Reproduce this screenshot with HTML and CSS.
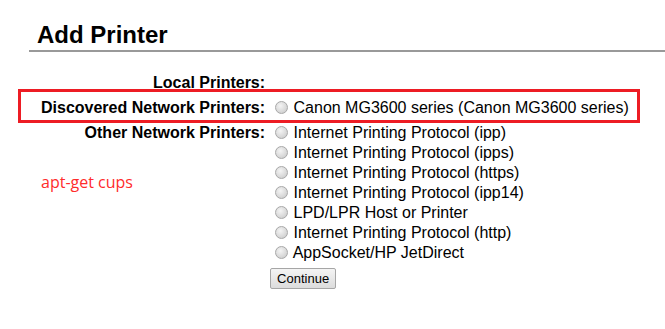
FILE: index.html
```html
<!DOCTYPE html>
<html lang="en">
<head>
    <meta charset="UTF-8">
    <title>Add Printer</title>
    <link rel="stylesheet" href="styles.css">
</head>
<body>
    <div class="page">
        <h2 class="title">Add Printer</h2>
        <form class="add-form">
            <table class="printers">
                <tr>
                    <th>Local Printers:</th>
                    <td></td>
                </tr>
                <tr>
                    <th>Discovered Network Printers:</th>
                    <td><input type="radio" name="device"> Canon MG3600 series (Canon MG3600 series)</td>
                </tr>
                <tr>
                    <th>Other Network Printers:</th>
                    <td>
                        <input type="radio" name="device"> Internet Printing Protocol (ipp)<br>
                        <input type="radio" name="device"> Internet Printing Protocol (ipps)<br>
                        <input type="radio" name="device"> Internet Printing Protocol (https)<br>
                        <input type="radio" name="device"> Internet Printing Protocol (ipp14)<br>
                        <input type="radio" name="device"> LPD/LPR Host or Printer<br>
                        <input type="radio" name="device"> Internet Printing Protocol (http)<br>
                        <input type="radio" name="device"> AppSocket/HP JetDirect
                    </td>
                </tr>
                <tr>
                    <th></th>
                    <td><button type="button" class="continue">Continue</button></td>
                </tr>
            </table>
        </form>
        <div class="mark"></div>
        <div class="note">apt-get cups</div>
    </div>
</body>
</html>
```
FILE: styles.css
```css
body {
    margin: 0;
    background: #fff;
    font-family: "Liberation Sans", Arial, sans-serif;
    color: #000;
}

.page {
    position: relative;
    padding: 22px 0 0 29px;
}

.title {
    margin: 0;
    padding: 0 0 2px 8px;
    font-size: 24px;
    line-height: 26px;
    font-weight: bold;
    border-bottom: 2px solid #999;
}

.add-form {
    margin: 0;
}

.printers {
    margin: 16px 0 0 7px;
    border-spacing: 5px;
    font-size: 16px;
    line-height: 20px;
}

.printers th {
    padding: 0;
    text-align: right;
    vertical-align: top;
    font-weight: bold;
    white-space: nowrap;
}

.printers td {
    padding: 0;
    vertical-align: top;
    white-space: nowrap;
}

.printers input[type="radio"] {
    appearance: none;
    -webkit-appearance: none;
    box-sizing: border-box;
    width: 13px;
    height: 13px;
    margin: 0 1px 0 5px;
    border: 1px solid #a8a8a8;
    border-radius: 50%;
    background: radial-gradient(circle at 40% 35%, #f4f4f4, #d4d4d4 70%, #c4c4c4);
    vertical-align: -1px;
}

.continue {
    height: 21px;
    padding: 0 6px;
    font-family: "Liberation Sans", Arial, sans-serif;
    font-size: 13px;
    color: #000;
    border: 1px solid #a6a6a6;
    border-radius: 2px;
    background: linear-gradient(#f4f4f4, #dcdcdc);
}

.mark {
    position: absolute;
    left: 18px;
    top: 89px;
    width: 616px;
    height: 28px;
    border: 3px solid #ed1c24;
}

.note {
    position: absolute;
    left: 41px;
    top: 171px;
    font-family: "Open Sans", "Noto Sans", sans-serif;
    font-size: 16px;
    color: #ff2b2b;
}
```
